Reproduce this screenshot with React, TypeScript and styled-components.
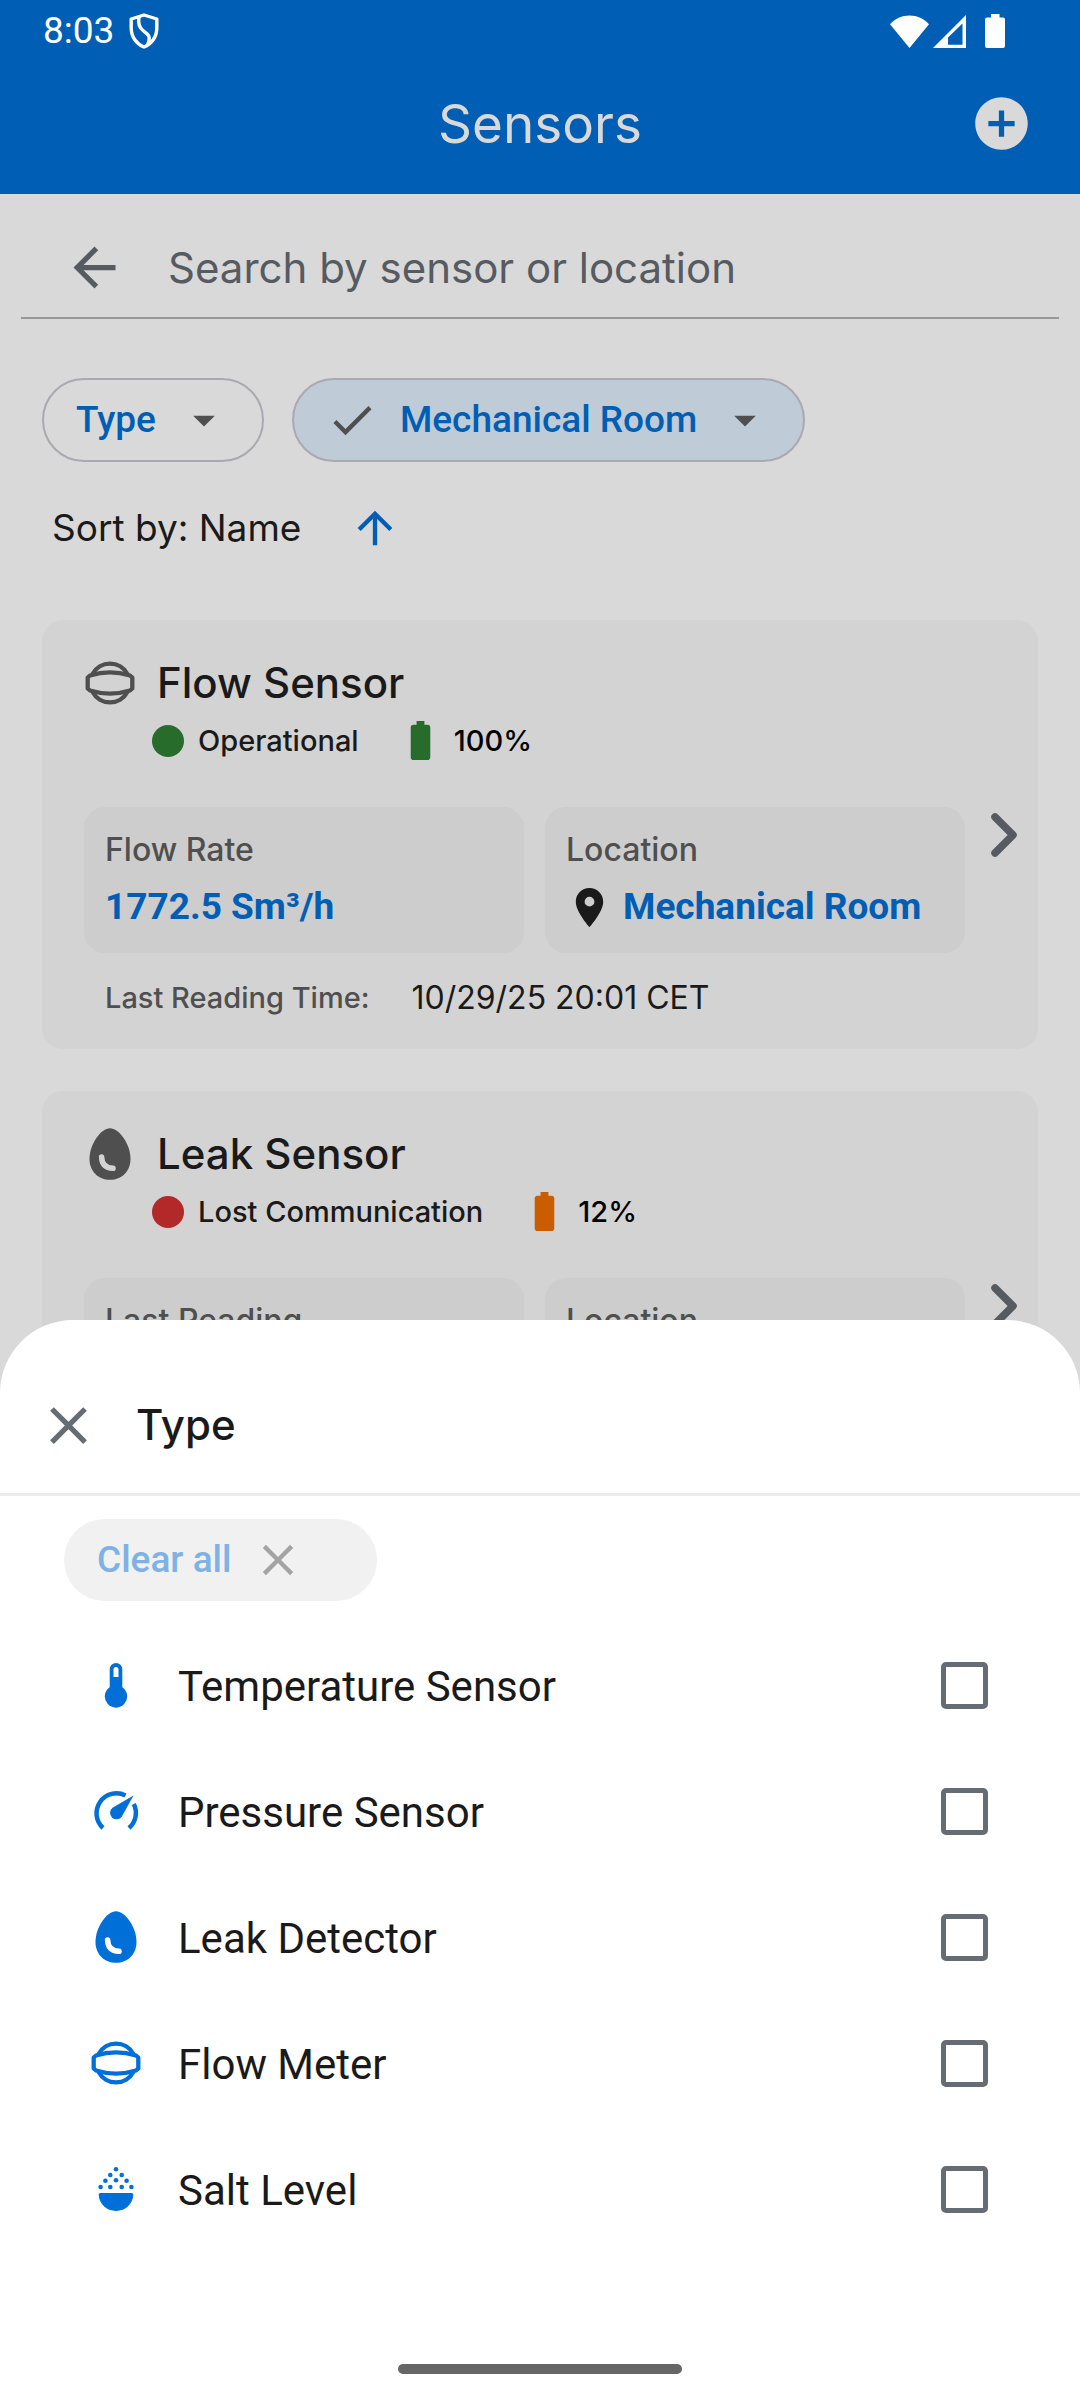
import React from "react";
import styled, { createGlobalStyle } from "styled-components";
import {
  MdAddCircle,
  MdArrowBack,
  MdArrowDropDown,
  MdArrowUpward,
  MdBatteryFull,
  MdCheck,
  MdClose,
  MdPlace,
} from "react-icons/md";

const color = {
  brand: "#005eb5",
  accent: "#0070d8",
  page: "#d9d9d9",
  card: "#d3d3d3",
  tile: "#cdcdcd",
  ink: "#1a1a1a",
  muted: "#4f4f4f",
  slate: "#565b61",
};

const GlobalStyle = createGlobalStyle`
  * { box-sizing: border-box; }
  body { margin: 0; background: ${color.page}; }
  button, input { font: inherit; color: inherit; margin: 0; padding: 0; border: 0; background: none; }
  button { cursor: pointer; }
  h1, h2, p, ul { margin: 0; padding: 0; font-weight: inherit; font-size: inherit; }
  svg { display: block; flex: none; }
`;

const Screen = styled.div`
  position: relative;
  display: flex;
  flex-direction: column;
  height: 100vh;
  overflow: hidden;
  background: ${color.page};
  color: ${color.ink};
  font-family: Inter, "Liberation Sans", sans-serif;
`;

const Header = styled.header`
  flex: none;
  background: ${color.brand};
`;

const StatusBar = styled.div`
  display: flex;
  align-items: center;
  height: 62px;
  padding: 0 75px 0 43px;
  color: #fff;
  font: 400 37px/42px Roboto, sans-serif;
`;

const StatusIcons = styled.div`
  display: flex;
  align-items: center;
  margin-left: auto;
  gap: 4px;
`;

const BatterySlot = styled.span`
  margin-left: 15px;
`;

const ShieldSlot = styled.span`
  margin-left: 15px;
`;

const AppBar = styled.div`
  display: grid;
  grid-template-columns: 1fr auto 1fr;
  align-items: center;
  height: 132px;
  padding: 0 47px 9px;
  color: ${color.page};
`;

const Title = styled.h1`
  grid-column: 2;
  font-size: 53px;
  line-height: 64px;
  font-weight: 400;
`;

const AddButton = styled.button`
  justify-self: end;
`;

const Content = styled.main`
  display: flex;
  flex-direction: column;
  flex: none;
`;

const SearchBar = styled.div`
  display: flex;
  align-items: center;
  gap: 42px;
  height: 125px;
  margin: 0 21px;
  padding: 24px 42px 0;
  border-bottom: 2px solid #96989c;
  color: ${color.slate};
`;

const SearchInput = styled.input`
  flex: 1;
  min-width: 0;
  height: 64px;
  font-size: 42px;
  outline: none;

  &::placeholder {
    color: ${color.slate};
    opacity: 1;
  }
`;

const Filters = styled.div`
  display: flex;
  gap: 28px;
  margin: 59px 42px 0;
`;

const Chip = styled.button<{ $selected?: boolean }>`
  display: flex;
  align-items: center;
  gap: 22px;
  height: 84px;
  padding: 0 32px;
  border: 2px solid #aaa8b0;
  border-radius: 42px;
  background: ${(p) => (p.$selected ? "#bfcbd6" : "transparent")};
  color: ${color.brand};
  font: 500 37px/42px Roboto, sans-serif;

  svg {
    color: ${color.muted};
  }
`;

const SortButton = styled.button`
  display: flex;
  align-items: center;
  align-self: flex-start;
  gap: 48px;
  height: 52px;
  margin: 40px 52px 66px;
  font-size: 37px;
  line-height: 52px;

  svg {
    color: ${color.brand};
  }
`;

const CardList = styled.div`
  display: flex;
  flex-direction: column;
  gap: 42px;
  padding: 0 42px;
`;

const Card = styled.article`
  display: flex;
  align-items: center;
  gap: 26px;
  padding: 0 21px 0 42px;
  border-radius: 21px;
  background: ${color.card};
`;

const CardBody = styled.div`
  flex: 1;
  min-width: 0;
  padding: 37px 0 30px;
`;

const CardTitle = styled.div`
  display: flex;
  align-items: center;
  gap: 21px;
  color: ${color.muted};

  h2 {
    color: ${color.ink};
    font-size: 42px;
    line-height: 52px;
    font-weight: 500;
  }
`;

const CardStatus = styled.div`
  display: flex;
  align-items: center;
  height: 47px;
  margin: 8px 0 43px 68px;
  font-size: 29px;
  line-height: 42px;
  font-weight: 500;
`;

const Dot = styled.span<{ $color: string }>`
  width: 32px;
  height: 32px;
  margin-right: 14px;
  border-radius: 50%;
  background: ${(p) => p.$color};
`;

const Battery = styled.span<{ $color: string }>`
  display: flex;
  align-items: center;
  gap: 10px;
  margin-left: 38px;
  color: #000;

  svg {
    color: ${(p) => p.$color};
  }
`;

const Tiles = styled.div`
  display: grid;
  grid-template-columns: 22fr 21fr;
  gap: 21px;
`;

const Tile = styled.div`
  display: flex;
  flex-direction: column;
  gap: 10px;
  padding: 22px 21px 20px;
  border-radius: 21px;
  background: ${color.tile};
`;

const TileLabel = styled.p`
  color: ${color.muted};
  font-size: 32px;
  line-height: 42px;
  font-weight: 500;
`;

const TileValue = styled.p`
  display: flex;
  align-items: center;
  gap: 10px;
  color: ${color.brand};
  font: 700 37px/52px Roboto, sans-serif;
  white-space: nowrap;

  svg {
    color: ${color.ink};
  }
`;

const Reading = styled.p`
  display: flex;
  align-items: center;
  gap: 42px;
  margin-top: 24px;
  padding-left: 21px;
  font-size: 32px;
  line-height: 42px;
`;

const ReadingLabel = styled.span`
  color: ${color.muted};
  font-size: 29px;
  font-weight: 500;
`;

const OpenButton = styled.button`
  color: ${color.slate};
`;

const Sheet = styled.section`
  position: absolute;
  right: 0;
  bottom: 0;
  left: 0;
  display: flex;
  flex-direction: column;
  border-radius: 73px 73px 0 0;
  background: #fff;
`;

const SheetHeader = styled.div`
  display: flex;
  align-items: center;
  gap: 36px;
  height: 176px;
  padding: 37px 37px 0;
  border-bottom: 3px solid #ebebeb;

  button {
    color: #656c74;
  }

  h2 {
    font-size: 42px;
    line-height: 52px;
    font-weight: 500;
  }
`;

const ClearButton = styled.button`
  display: flex;
  align-items: center;
  align-self: flex-start;
  gap: 21px;
  height: 82px;
  margin: 23px 64px 21px;
  padding: 0 73px 0 33px;
  border-radius: 41px;
  background: #f1f1f1;
  color: #7fb2e4;
  font: 500 37px/42px Roboto, sans-serif;

  svg {
    color: #a3a3a3;
  }
`;

const Options = styled.ul`
  list-style: none;
`;

const Option = styled.label`
  display: flex;
  align-items: center;
  gap: 36px;
  height: 126px;
  padding: 0 92px 0 90px;
  font: 400 42px/52px Roboto, sans-serif;
  cursor: pointer;

  svg {
    color: ${color.accent};
  }
`;

const OptionName = styled.span`
  padding-top: 4px;
`;

const Checkbox = styled.input`
  appearance: none;
  width: 47px;
  height: 47px;
  margin-left: auto;
  border: 5px solid #656c74;
  border-radius: 5px;

  &:checked {
    background: ${color.accent};
    border-color: ${color.accent};
  }
`;

const HomeBar = styled.div`
  align-self: center;
  width: 284px;
  height: 10px;
  margin: 112px 0 26px;
  border-radius: 5px;
  background: #666;
`;

const ShieldIcon = () => (
  <svg width="30" height="36" viewBox="0 0 30 36" fill="none" stroke="#fff" strokeWidth="3.4" strokeLinejoin="round">
    <path d="M15 2 L27.8 6 V15 C27.8 24 22.500 31 15 34 C7.500 31 2.200 24 2.200 15 V6 Z" />
    <path d="M10 4 C9 10 9.500 14 14 17.500 C20 22 22 23 18.500 32" />
  </svg>
);

const WifiIcon = () => (
  <svg width="39" height="33" viewBox="0 0 39 33" fill="#fff">
    <path d="M19.500 33 L0 9.300 C5 3.700 12 .5 19.500 .5 S34 3.700 39 9.300 Z" />
  </svg>
);

const SignalIcon = () => (
  <svg width="33" height="33" viewBox="0 0 33 33" fill="#fff" fillRule="evenodd">
    <path d="M33 0 V33 H0 Z M29.500 8.500 L15 22.500 V29.800 H29.500 Z" />
  </svg>
);

const PhoneBatteryIcon = () => (
  <svg width="20" height="34" viewBox="0 0 20 34" fill="#fff">
    <path d="M6 0 H14.500 V3.500 H18 Q20 3.500 20 5.500 V32 Q20 34 18 34 H2 Q0 34 0 32 V5.500 Q0 3.500 2 3.500 H6 Z" />
  </svg>
);

const ChevronIcon = () => (
  <svg width="26" height="44" viewBox="0 0 26 44" fill="none" stroke="currentColor" strokeWidth="7.500" strokeLinecap="round" strokeLinejoin="round">
    <path d="M4 4 L22 22 L4 40" />
  </svg>
);

const ThermometerIcon = () => (
  <svg width="52" height="52" viewBox="0 0 52 52" fill="currentColor" fillRule="evenodd">
    <path d="M19.700 10.300 A6.300 6.300 0 0 1 32.300 10.300 V28.200 A11.200 11.200 0 1 1 19.700 28.200 Z M23.500 18 H28.500 V10.500 A2.500 2.500 0 0 0 23.500 10.500 Z" />
  </svg>
);

const GaugeIcon = () => (
  <svg width="52" height="52" viewBox="0 0 52 52" fill="none" stroke="currentColor" strokeWidth="4.500">
    <path d="M13 43 A20 20 0 0 1 35.500 10.400" strokeLinecap="butt" />
    <path d="M43.800 19 A20 20 0 0 1 39 43" />
    <path d="M43.500 10.500 L31.600 32 A6.500 6.500 0 1 1 22.500 22.800 Z" fill="currentColor" stroke="none" />
  </svg>
);

const DropIcon = ({ shine }: { shine: string }) => (
  <svg width="52" height="52" viewBox="0 0 52 52" fill="none">
    <path
      d="M26 .3 C35 .3 46.500 16 46.500 31 C46.500 43.500 37.500 51.800 26 51.800 S5.500 43.500 5.500 31 C5.500 16 17 .3 26 .3 Z"
      fill="currentColor"
    />
    <path d="M17.600 29 C17.800 36 21.500 40 29 40.300" stroke={shine} strokeWidth="5.500" strokeLinecap="round" />
  </svg>
);

const FlowIcon = () => (
  <svg width="52" height="52" viewBox="0 0 52 52" fill="none" stroke="currentColor" strokeWidth="4.300" strokeLinejoin="round">
    <path d="M6 18.500 Q26 12.200 46 18.500 L48.300 20.500 V31.500 L46 33.500 Q26 39.800 6 33.500 L3.700 31.500 V20.500 Z" />
    <path d="M8.600 17 A19.800 19.800 0 0 1 43.400 17 M8.600 35 A19.800 19.800 0 0 0 43.400 35" />
  </svg>
);

const SALT_GRAINS = [
  [26, 6.3],
  [20.3, 12], [31.7, 12],
  [15.4, 17.8], [26, 17.3], [36.6, 17.8],
  [10.6, 24], [20.3, 24], [31.7, 24], [41.4, 24],
];

const SaltIcon = () => (
  <svg width="52" height="52" viewBox="0 0 52 52" fill="currentColor">
    {SALT_GRAINS.map(([x, y]) => (
      <circle key={`${x}-${y}`} cx={x} cy={y} r="2.3" />
    ))}
    <path d="M10.300 30 H41.700 Q43.300 30 43.300 31.600 C43 41 35.500 48 26 48 S9 41 8.700 31.600 Q8.700 30 10.300 30 Z" />
  </svg>
);

const SENSORS = [
  {
    name: "Flow Sensor",
    icon: <FlowIcon />,
    status: "Operational",
    statusColor: "#286c2c",
    battery: "100%",
    batteryColor: "#286c2c",
    label: "Flow Rate",
    value: "1772.5 Sm³/h",
    time: "10/29/25 20:01 CET",
  },
  {
    name: "Leak Sensor",
    icon: <DropIcon shine={color.card} />,
    status: "Lost Communication",
    statusColor: "#b32828",
    battery: "12%",
    batteryColor: "#cb5d00",
    label: "Last Reading",
    value: "Dry",
    time: "10/29/25 20:01 CET",
  },
];

const TYPES = [
  { id: "temperature", name: "Temperature Sensor", icon: <ThermometerIcon /> },
  { id: "pressure", name: "Pressure Sensor", icon: <GaugeIcon /> },
  { id: "leak", name: "Leak Detector", icon: <DropIcon shine="#fff" /> },
  { id: "flow", name: "Flow Meter", icon: <FlowIcon /> },
  { id: "salt", name: "Salt Level", icon: <SaltIcon /> },
];

export default function App() {
  return (
    <>
      <GlobalStyle />
      <Screen>
        <Header>
          <StatusBar>
            <span>8:03</span>
            <ShieldSlot><ShieldIcon /></ShieldSlot>
            <StatusIcons>
              <WifiIcon />
              <SignalIcon />
              <BatterySlot><PhoneBatteryIcon /></BatterySlot>
            </StatusIcons>
          </StatusBar>
          <AppBar>
            <Title>Sensors</Title>
            <AddButton type="button" aria-label="Add sensor"><MdAddCircle size={63} /></AddButton>
          </AppBar>
        </Header>

        <Content>
          <SearchBar>
            <button type="button" aria-label="Back"><MdArrowBack size={63} /></button>
            <SearchInput type="text" aria-label="Search by sensor or location" placeholder="Search by sensor or location" />
          </SearchBar>

          <Filters>
            <Chip type="button" aria-haspopup="dialog">
              Type
              <MdArrowDropDown size={52} />
            </Chip>
            <Chip type="button" aria-haspopup="dialog" $selected>
              <MdCheck size={52} />
              Mechanical Room
              <MdArrowDropDown size={52} />
            </Chip>
          </Filters>

          <SortButton type="button">
            Sort by: Name
            <MdArrowUpward size={52} />
          </SortButton>

          <CardList>
            {SENSORS.map((s) => (
              <Card key={s.name}>
                <CardBody>
                  <CardTitle>
                    {s.icon}
                    <h2>{s.name}</h2>
                  </CardTitle>
                  <CardStatus>
                    <Dot $color={s.statusColor} />
                    {s.status}
                    <Battery $color={s.batteryColor}>
                      <MdBatteryFull size={47} />
                      {s.battery}
                    </Battery>
                  </CardStatus>
                  <Tiles>
                    <Tile>
                      <TileLabel>{s.label}</TileLabel>
                      <TileValue>{s.value}</TileValue>
                    </Tile>
                    <Tile>
                      <TileLabel>Location</TileLabel>
                      <TileValue>
                        <MdPlace size={47} />
                        Mechanical Room
                      </TileValue>
                    </Tile>
                  </Tiles>
                  <Reading>
                    <ReadingLabel>Last Reading Time:</ReadingLabel>
                    {s.time}
                  </Reading>
                </CardBody>
                <OpenButton type="button" aria-label={`Open ${s.name}`}><ChevronIcon /></OpenButton>
              </Card>
            ))}
          </CardList>
        </Content>

        <Sheet role="dialog" aria-labelledby="sheet-title">
          <SheetHeader>
            <button type="button" aria-label="Close"><MdClose size={63} /></button>
            <h2 id="sheet-title">Type</h2>
          </SheetHeader>
          <ClearButton type="button">
            Clear all
            <MdClose size={52} />
          </ClearButton>
          <Options>
            {TYPES.map((t) => (
              <li key={t.id}>
                <Option htmlFor={t.id}>
                  {t.icon}
                  <OptionName>{t.name}</OptionName>
                  <Checkbox type="checkbox" id={t.id} />
                </Option>
              </li>
            ))}
          </Options>
          <HomeBar />
        </Sheet>
      </Screen>
    </>
  );
}
